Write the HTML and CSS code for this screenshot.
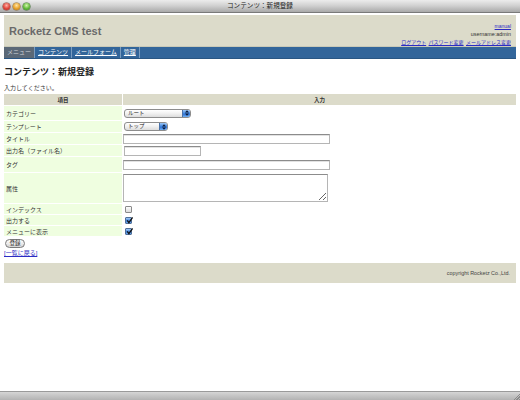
FILE: index.html
```html
<!DOCTYPE html>
<html lang="ja">
<head>
<meta charset="utf-8">
<title>コンテンツ：新規登録</title>
<link rel="stylesheet" href="styles.css">
</head>
<body>
<div class="window">
  <div class="titlebar">
    <div class="lights">
      <span class="light red"></span>
      <span class="light yellow"></span>
      <span class="light green"></span>
    </div>
    <div class="wtitle">コンテンツ：新規登録</div>
    <div></div>
  </div>
  <div class="viewport">
    <header class="header">
      <div class="site-title">Rocketz CMS test</div>
      <div class="user">
        <div><a href="#">manual</a></div>
        <div class="uname">username:admin</div>
        <div class="ulinks"><a href="#">ログアウト</a> <a href="#">パスワード変更</a> <a href="#">メールアドレス変更</a></div>
      </div>
    </header>
    <nav class="nav">
      <span class="nav-item current">メニュー</span>
      <a class="nav-item" href="#">コンテンツ</a>
      <a class="nav-item" href="#">メールフォーム</a>
      <a class="nav-item" href="#">管理</a>
    </nav>
    <h2 class="page-title">コンテンツ：新規登録</h2>
    <p class="note">入力してください。</p>
    <form class="form">
      <table class="form-table">
        <tr class="r-head">
          <th class="col-label">項目</th>
          <th>入力</th>
        </tr>
        <tr class="r-cat">
          <td class="label">カテゴリー</td>
          <td class="field">
            <span class="select w-cat"><select><option>ルート</option></select><span class="sel-btn"><svg width="4" height="6" viewBox="0 0 4 6"><path d="M0 2.4 L2 0.3 L4 2.4Z M0 3.6 L2 5.7 L4 3.6Z" fill="#fff"/></svg></span></span>
          </td>
        </tr>
        <tr class="r-std">
          <td class="label">テンプレート</td>
          <td class="field">
            <span class="select w-tpl"><select><option>トップ</option></select><span class="sel-btn"><svg width="4" height="6" viewBox="0 0 4 6"><path d="M0 2.4 L2 0.3 L4 2.4Z M0 3.6 L2 5.7 L4 3.6Z" fill="#fff"/></svg></span></span>
          </td>
        </tr>
        <tr class="r-std">
          <td class="label">タイトル</td>
          <td class="field"><input class="text long" type="text"></td>
        </tr>
        <tr class="r-std">
          <td class="label">出力名（ファイル名）</td>
          <td class="field"><input class="text short" type="text"></td>
        </tr>
        <tr class="r-tag">
          <td class="label">タグ</td>
          <td class="field"><input class="text long" type="text"></td>
        </tr>
        <tr class="r-attr">
          <td class="label">属性</td>
          <td class="field"><textarea class="area"></textarea></td>
        </tr>
        <tr class="r-chk">
          <td class="label">インデックス</td>
          <td class="field"><span class="cb"></span></td>
        </tr>
        <tr class="r-chk">
          <td class="label">出力する</td>
          <td class="field"><span class="cb on"><svg width="7" height="7" viewBox="0 0 7 7"><path d="M1.2 3.4 L2.9 5.6 L6.6 0.4" fill="none" stroke="#111" stroke-width="1.3"/></svg></span></td>
        </tr>
        <tr class="r-chk">
          <td class="label">メニューに表示</td>
          <td class="field"><span class="cb on"><svg width="7" height="7" viewBox="0 0 7 7"><path d="M1.2 3.4 L2.9 5.6 L6.6 0.4" fill="none" stroke="#111" stroke-width="1.3"/></svg></span></td>
        </tr>
      </table>
      <button class="submit" type="button">登録</button>
    </form>
    <a class="back" href="#">[一覧に戻る]</a>
    <footer class="footer">copyright Rocketz Co.,Ltd.</footer>
  </div>
  <div class="statusbar"><span class="grip"></span></div>
</div>
</body>
</html>
```
FILE: styles.css
```css
* { box-sizing: border-box; }
html, body { margin: 0; padding: 0; }
body {
  font-family: "Liberation Sans", "Noto Sans CJK JP", sans-serif;
  font-size: 6px;
  color: #333;
  background: #fff;
}
a { color: #2b2bc4; }

.window {
  width: 520px;
  height: 400px;
  display: flex;
  flex-direction: column;
  overflow: hidden;
  background: #fff;
}

/* title bar */
.titlebar {
  flex: none;
  height: 13px;
  display: grid;
  grid-template-columns: 1fr auto 1fr;
  align-items: center;
  background: linear-gradient(#ececec, #d2d2d2 45%, #a9a9a9);
  border-bottom: 1px solid #7a7a7a;
}
.lights { display: flex; gap: 3px; padding-left: 3px; }
.light {
  width: 7px;
  height: 7px;
  border-radius: 50%;
}
.light.red { background: radial-gradient(circle at 50% 35%, #ffb3a8, #e0443a 55%, #a82418); box-shadow: 0 0 0 0.5px #8a3a30; }
.light.yellow { background: radial-gradient(circle at 50% 35%, #ffe6a8, #e8a22a 55%, #b06d10); box-shadow: 0 0 0 0.5px #8a6a30; }
.light.green { background: radial-gradient(circle at 50% 35%, #d6f5b0, #62bd3c 55%, #327d18); box-shadow: 0 0 0 0.5px #3e7030; }
.wtitle {
  font-size: 6.6px;
  color: #222;
  line-height: 12px;
}

/* page */
.viewport {
  flex: 1;
  padding: 2px 4px 0;
  overflow: hidden;
}
.header {
  height: 31px;
  background: #dcdbca;
  display: flex;
  justify-content: space-between;
  padding: 0 5px 0 5px;
}
.site-title {
  align-self: center;
  font-size: 11px;
  font-weight: bold;
  color: #6a6a6a;
  padding-top: 1px;
}
.user {
  align-self: flex-end;
  text-align: right;
  font-size: 5px;
  line-height: 8px;
}
.user a { color: #2b2bc4; }
.uname { font-size: 5.4px; color: #333; }
.ulinks a { margin-left: 1px; }

.nav {
  height: 13px;
  background: #32659a;
  display: flex;
  border-top: 1px solid #c9c9b8;
  border-bottom: 1px solid #2a5683;
}
.nav-item {
  padding: 0 3px;
  line-height: 11px;
  font-size: 6px;
  color: #fff;
  border-right: 1px solid #7a9cc0;
}
.nav-item.current {
  background: #5a6877;
  color: #cfd3d8;
  padding: 0 3px;
}

.page-title {
  margin: 8px 0 0;
  font-size: 9px;
  line-height: 11px;
  font-weight: bold;
  color: #222;
}
.note {
  margin: 6px 0 0;
  line-height: 8px;
  font-size: 6px;
}

.form { margin: 0; }
.form-table {
  width: calc(100% + 2px);
  margin: 1px -1px 0;
  border-collapse: separate;
  border-spacing: 1px;
}
.form-table th {
  background: #dcdbca;
  font-size: 5.5px;
  font-weight: bold;
  color: #333;
  padding: 0;
  height: 11px;
  text-align: center;
}
.form-table th.col-label { width: 118px; }
.form-table td { padding: 0; vertical-align: middle; }
.form-table td.label {
  background: #effee0;
  padding: 0 2px;
  color: #333;
}
.form-table td.field { padding-left: 0; }
.r-cat td { height: 14px; }
.r-std td { height: 11px; }
.r-tag td { height: 15px; }
.r-attr td { height: 30px; }
.r-chk td { height: 10px; }

/* aqua select */
.select {
  display: inline-flex;
  height: 9px;
  border: 1px solid #8d8d8d;
  border-radius: 3px;
  overflow: hidden;
  vertical-align: middle;
  margin-left: 1px;
  background: linear-gradient(#ffffff, #f0f0f0 50%, #dcdcdc);
}
.select select {
  appearance: none;
  -webkit-appearance: none;
  flex: 1;
  min-width: 0;
  border: 0;
  margin: 0;
  padding: 0 0 0 3px;
  background: transparent;
  font: 5.5px "Liberation Sans", "Noto Sans CJK JP", sans-serif;
  color: #222;
  height: 7px;
  line-height: 7px;
}
.w-cat { width: 67px; }
.w-tpl { width: 44px; }
.sel-btn {
  flex: none;
  width: 8px;
  display: flex;
  align-items: center;
  justify-content: center;
  background: linear-gradient(#9cc6f5, #3d83de 50%, #2a6bd0 55%, #6fb0f2);
  border-left: 1px solid #4a72a8;
}
.sel-btn svg path { fill: #0a1a3a; }

.text {
  display: block;
  height: 10px;
  border: 1px solid #b5b5b5;
  border-top-color: #8c8c8c;
  padding: 0;
  background: #fff;
  box-shadow: inset 0 1px 0 #e2e2e2;
  font: 6px "Liberation Sans", sans-serif;
}
.text.long { width: 207px; }
.text.short { width: 77px; margin-left: 1px; }
.area {
  display: block;
  width: 205px;
  height: 28px;
  border: 1px solid #b5b5b5;
  border-top-color: #8c8c8c;
  padding: 0;
  margin: 0;
  font: 6px "Liberation Sans", sans-serif;
  resize: both;
}

.cb {
  display: block;
  width: 7px;
  height: 7px;
  margin-left: 2px;
  border: 1px solid #8a8a8a;
  border-radius: 1px;
  background: linear-gradient(#fdfdfd, #dcdcdc);
  position: relative;
}
.cb.on {
  background: linear-gradient(#a7cdf6, #3c7fd8 55%, #6fa9ea);
  border-color: #4f6f98;
}
.cb svg { position: absolute; left: 0; top: -1px; }

.submit {
  display: block;
  margin: 2px 0 0 1px;
  width: 20px;
  height: 9px;
  padding: 0;
  border: 1px solid #7b7b7b;
  border-radius: 5px;
  background: linear-gradient(#ffffff, #ececec 50%, #d4d4d4);
  font: 5.5px "Liberation Sans", "Noto Sans CJK JP", sans-serif;
  color: #222;
  line-height: 7px;
}
.back {
  display: inline-block;
  margin-top: 1px;
  line-height: 8px;
  font-size: 6px;
}

.footer {
  margin-top: 6px;
  height: 20px;
  background: #dcdbca;
  display: flex;
  align-items: center;
  justify-content: flex-end;
  padding-right: 6px;
  font-size: 5.4px;
  color: #444;
}

.statusbar {
  flex: none;
  height: 9px;
  border-top: 1px solid #9a9a9a;
  background: linear-gradient(#d6d6d6, #c4c4c4 50%, #b3b3b3);
  display: flex;
  justify-content: flex-end;
  align-items: flex-end;
}
.grip {
  width: 7px;
  height: 7px;
  background: repeating-linear-gradient(135deg, transparent 0 1px, #8a8a8a 1px 2px);
  clip-path: polygon(100% 0, 100% 100%, 0 100%);
}
```
